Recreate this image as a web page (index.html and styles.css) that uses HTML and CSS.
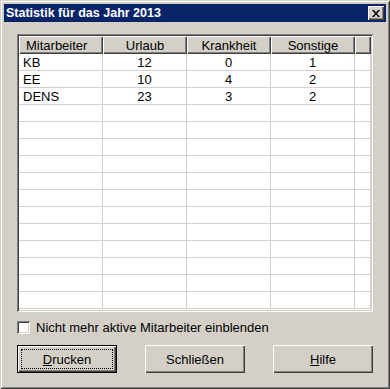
FILE: index.html
```html
<!DOCTYPE html>
<html lang="de">
<head>
    <meta charset="UTF-8">
    <title>Statistik für das Jahr 2013</title>
    <link rel="stylesheet" href="styles.css">
</head>
<body>
    <div class="window">
        <div class="titlebar">
            <span class="title">Statistik für das Jahr 2013</span>
            <span class="close-btn">
                <svg width="8" height="7" viewBox="0 0 8 7">
                    <path d="M0 0h2l2 2.5 2-2.5h2L5 3.5 8 7H6L4 4.5 2 7H0l3-3.5z" fill="#000"/>
                </svg>
            </span>
        </div>

        <div class="content">
            <div class="grid">
                <table class="list">
                    <tr class="head">
                        <th class="first">Mitarbeiter</th>
                        <th>Urlaub</th>
                        <th>Krankheit</th>
                        <th>Sonstige</th>
                        <th class="rest"></th>
                    </tr>
                    <tr><td class="name">KB</td><td>12</td><td>0</td><td>1</td><td></td></tr>
                    <tr><td class="name">EE</td><td>10</td><td>4</td><td>2</td><td></td></tr>
                    <tr><td class="name">DENS</td><td>23</td><td>3</td><td>2</td><td></td></tr>
                    <tr><td></td><td></td><td></td><td></td><td></td></tr>
                    <tr><td></td><td></td><td></td><td></td><td></td></tr>
                    <tr><td></td><td></td><td></td><td></td><td></td></tr>
                    <tr><td></td><td></td><td></td><td></td><td></td></tr>
                    <tr><td></td><td></td><td></td><td></td><td></td></tr>
                    <tr><td></td><td></td><td></td><td></td><td></td></tr>
                    <tr><td></td><td></td><td></td><td></td><td></td></tr>
                    <tr><td></td><td></td><td></td><td></td><td></td></tr>
                    <tr><td></td><td></td><td></td><td></td><td></td></tr>
                    <tr><td></td><td></td><td></td><td></td><td></td></tr>
                    <tr><td></td><td></td><td></td><td></td><td></td></tr>
                    <tr><td></td><td></td><td></td><td></td><td></td></tr>
                </table>
            </div>

            <label class="check-row">
                <span class="checkbox"></span>
                <span>Nicht mehr aktive Mitarbeiter einblenden</span>
            </label>

            <div class="buttons">
                <div class="btn default"><span class="focus"><u>D</u>rucken</span></div>
                <div class="btn">Schließen</div>
                <div class="btn"><u>H</u>ilfe</div>
            </div>
        </div>
    </div>
</body>
</html>
```

FILE: styles.css
```css
body {
    margin: 0;
    background: #d4d0c8;
    font-family: "Liberation Sans", Arial, sans-serif;
    font-size: 13px;
    color: #000;
}
.window {
    width: 390px;
    height: 389px;
    box-sizing: border-box;
    padding: 4px;
    background: #d4d0c8;
    box-shadow: inset 1px 1px 0 #d4d0c8, inset -1px -1px 0 #404040,
                inset 2px 2px 0 #fff, inset -2px -2px 0 #808080;
}
.titlebar {
    height: 18px;
    background: #0a246a;
    color: #fff;
    display: flex;
    align-items: center;
    justify-content: space-between;
    padding: 0 2px 0 2px;
}
.title {
    font-weight: bold;
    font-size: 12.5px;
}
.close-btn {
    width: 16px;
    height: 14px;
    box-sizing: border-box;
    background: #d4d0c8;
    display: flex;
    align-items: center;
    justify-content: center;
    box-shadow: inset 1px 1px 0 #fff, inset -1px -1px 0 #404040,
                inset -2px -2px 0 #808080;
}
.content {
    padding: 12px 13px 0 13px;
}
.grid {
    width: 356px;
    height: 278px;
    box-sizing: border-box;
    padding: 2px;
    background: #fff;
    overflow: hidden;
    box-shadow: inset 1px 1px 0 #808080, inset -1px -1px 0 #fff,
                inset 2px 2px 0 #404040, inset -2px -2px 0 #d4d0c8;
}
.list {
    border-collapse: separate;
    border-spacing: 0;
    table-layout: fixed;
    width: 352px;
}
.list th {
    height: 18px;
    padding: 0;
    box-sizing: border-box;
    background: #d4d0c8;
    font-weight: normal;
    text-align: center;
    width: 84px;
    box-shadow: inset 1px 1px 0 #fff, inset -1px -1px 0 #404040,
                inset -2px -2px 0 #808080;
}
.list th.first { text-align: left; padding-left: 7px; }
.list th.rest { width: auto; }
.list td {
    height: 17px;
    padding: 0;
    box-sizing: border-box;
    text-align: center;
    border-right: 1px solid #d4d0c8;
    border-bottom: 1px solid #d4d0c8;
    line-height: 15px;
}
.list td.name { text-align: left; padding-left: 4px; }
.check-row {
    display: flex;
    align-items: center;
    gap: 6px;
    margin-top: 9px;
    height: 13px;
}
.checkbox {
    width: 13px;
    height: 13px;
    box-sizing: border-box;
    background: #fff;
    box-shadow: inset 1px 1px 0 #808080, inset -1px -1px 0 #fff,
                inset 2px 2px 0 #404040, inset -2px -2px 0 #d4d0c8;
}
.buttons {
    display: flex;
    gap: 28px;
    margin-top: 11px;
}
.btn {
    width: 100px;
    height: 28px;
    box-sizing: border-box;
    display: flex;
    align-items: center;
    justify-content: center;
    background: #d4d0c8;
    box-shadow: inset 1px 1px 0 #fff, inset -1px -1px 0 #404040,
                inset -2px -2px 0 #808080;
}
.btn.default {
    border: 1px solid #000;
    padding: 3px;
}
.btn .focus {
    flex: 1;
    align-self: stretch;
    display: flex;
    align-items: center;
    justify-content: center;
    border: 1px dotted #000;
}
```
